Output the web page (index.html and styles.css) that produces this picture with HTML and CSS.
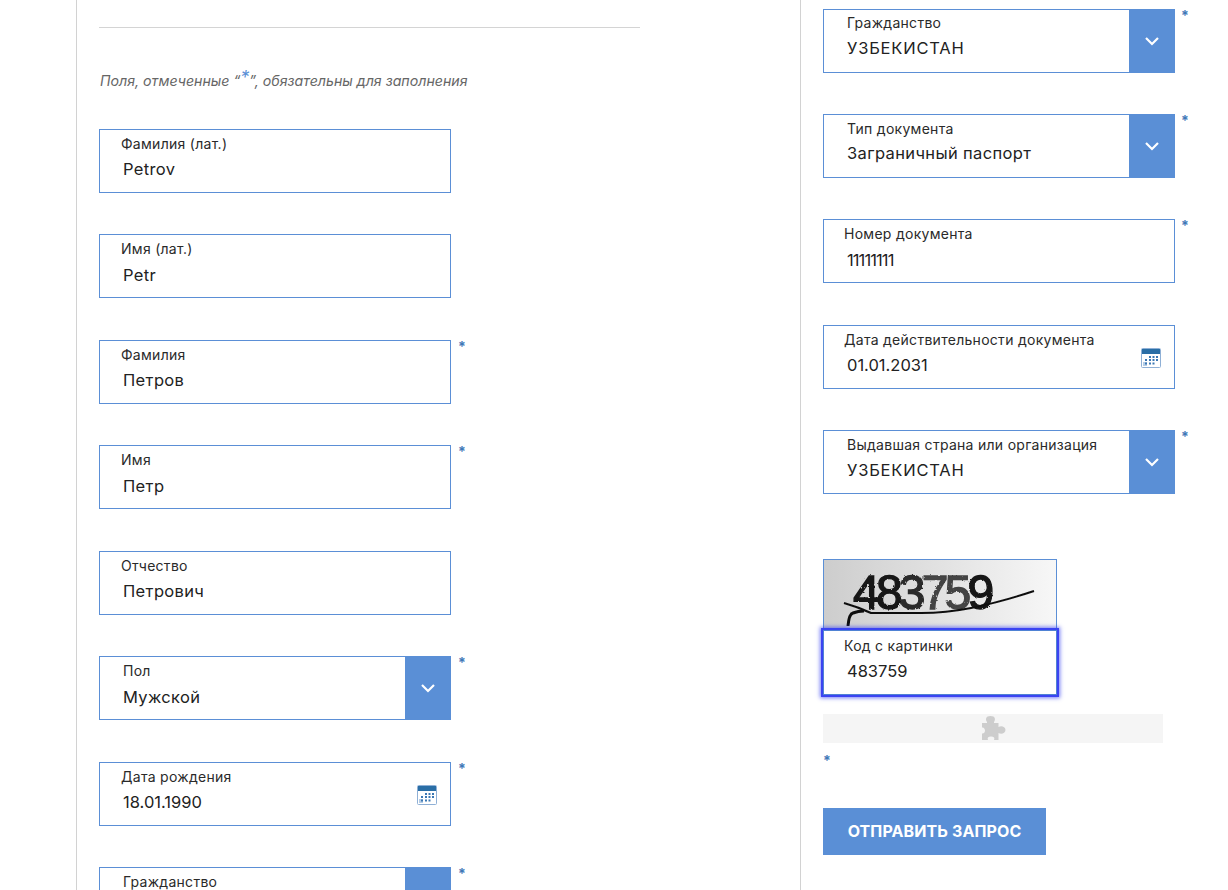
FILE: index.html
```html
<!DOCTYPE html>
<html lang="ru">
<head>
<meta charset="utf-8">
<title>Форма запроса</title>
<link rel="stylesheet" href="styles.css">
</head>
<body>
<svg class="defs" width="0" height="0" aria-hidden="true">
  <symbol id="chev" viewBox="0 0 16 10"><path d="M2 2l6 6 6-6" fill="none" stroke="#fff" stroke-width="2.2"/></symbol>
  <symbol id="cal" viewBox="0 0 20 20">
    <rect x=".5" y=".5" width="19" height="19" rx="1" fill="#fff" stroke="#8fb0d6"/>
    <rect x="1" y="1" width="18" height="5" fill="#2a6ea6"/>
    <path d="M2 14h4v4H2z" fill="#b5cde6"/>
    <path d="M8 8h2v2H8zM11.500 8h2v2h-2zM15 8h2v2h-2zM4 11h2v2H4zM8 11h2v2H8zM11.500 11h2v2h-2zM15 11h2v2h-2zM4 14.500h2v2H4zM8 14.500h2v2H8zM11.500 14.500h2v2h-2z" fill="#3c78b4"/>
  </symbol>
</svg>
<div class="page">
  <main class="left">
    <hr class="rule">
    <p class="note">Поля, отмеченные “<span class="note-star">*</span>”, обязательны для заполнения</p>
    <div class="col col-left">
      <div class="row"><div class="field"><label class="lab lab-in">Фамилия (лат.)</label><div class="val">Petrov</div></div></div>
      <div class="row"><div class="field"><label class="lab lab-in">Имя (лат.)</label><div class="val">Petr</div></div></div>
      <div class="row"><div class="field"><label class="lab lab-in">Фамилия</label><div class="val">Петров</div></div><span class="star">*</span></div>
      <div class="row"><div class="field"><label class="lab lab-in">Имя</label><div class="val">Петр</div></div><span class="star">*</span></div>
      <div class="row"><div class="field"><label class="lab lab-in">Отчество</label><div class="val">Петрович</div></div></div>
      <div class="row"><div class="field"><label class="lab">Пол</label><div class="val">Мужской</div><span class="drop"><svg class="chev"><use href="#chev"/></svg></span></div><span class="star">*</span></div>
      <div class="row"><div class="field"><label class="lab lab-in">Дата рождения</label><div class="val val-num">18.01.1990</div><svg class="cal"><use href="#cal"/></svg></div><span class="star">*</span></div>
      <div class="row"><div class="field"><label class="lab">Гражданство</label><div class="val">УЗБЕКИСТАН</div><span class="drop"><svg class="chev"><use href="#chev"/></svg></span></div><span class="star">*</span></div>
    </div>
  </main>
  <aside class="right">
    <div class="col col-right">
      <div class="row"><div class="field"><label class="lab lab-tight">Гражданство</label><div class="val val-caps">УЗБЕКИСТАН</div><span class="drop"><svg class="chev"><use href="#chev"/></svg></span></div><span class="star">*</span></div>
      <div class="row"><div class="field"><label class="lab">Тип документа</label><div class="val val-tight">Заграничный паспорт</div><span class="drop"><svg class="chev"><use href="#chev"/></svg></span></div><span class="star">*</span></div>
      <div class="row"><div class="field"><label class="lab lab-in2">Номер документа</label><div class="val val-ones">11111111</div></div><span class="star">*</span></div>
      <div class="row"><div class="field"><label class="lab lab-in2">Дата действительности документа</label><div class="val val-num">01.01.2031</div><svg class="cal"><use href="#cal"/></svg></div></div>
      <div class="row"><div class="field"><label class="lab">Выдавшая страна или организация</label><div class="val val-caps">УЗБЕКИСТАН</div><span class="drop"><svg class="chev"><use href="#chev"/></svg></span></div><span class="star">*</span></div>
    </div>
    <div class="captcha">
      <svg class="captcha-img" viewBox="0 0 232 70" role="img" aria-label="Капча">
        <defs>
          <linearGradient id="cg" x1="0" x2="1" y1="0" y2="0"><stop offset="0" stop-color="#cdcdcd"/><stop offset=".55" stop-color="#e4e4e4"/><stop offset="1" stop-color="#f7f7f7"/></linearGradient>
          <filter id="rough" x="-5%" y="-5%" width="110%" height="110%">
            <feTurbulence type="fractalNoise" baseFrequency=".35" numOctaves="2" seed="4" result="n"/>
            <feDisplacementMap in="SourceGraphic" in2="n" scale="2.500"/>
            <feGaussianBlur stdDeviation=".45"/>
          </filter>
          <filter id="soft"><feGaussianBlur stdDeviation=".5"/></filter>
        </defs>
        <rect width="232" height="70" fill="url(#cg)"/>
        <text x="29" y="49" class="captcha-txt" filter="url(#rough)"><tspan class="d1">48</tspan><tspan class="d2">3</tspan><tspan class="d3">75</tspan><tspan class="d1">9</tspan></text>
        <g filter="url(#soft)" fill="none" stroke="#111">
          <path d="M20 43q14 4 27 10h50q25 0 50-5 30-6 63-17" stroke-width="2"/>
          <path d="M24 66q1-12 5-13 5-2 11-2" stroke-width="3"/>
        </g>
      </svg>
      <div class="field field-focus"><label class="lab lab-in2">Код с картинки</label><div class="val val-num">483759</div></div>
    </div>
    <div class="puzzle-bar">
      <svg class="puzzle" viewBox="0 0 26 26"><path d="M7 7C5 4 6 1 10.500 1S16 4 14 7v1h4.500v4c2.500-1.500 7-.5 7 3s-4.500 4.500-7 3v7H14c1-2 0-3.500-3-3.500S7 23 8 25H2v-6.500c1.500.5 3-1 3-3S3.500 12 2 12.500V8h5z" fill="#cdcdcd"/></svg>
    </div>
    <div class="star star-solo">*</div>
    <button class="submit" type="button">ОТПРАВИТЬ ЗАПРОС</button>
  </aside>
</div>
</body>
</html>
```

FILE: styles.css
```css
html, body {
  margin: 0;
  padding: 0;
  background: #fff;
  height: 890px;
  overflow: hidden;
}
body {
  font-family: "Inter", "Noto Sans", "Liberation Sans", sans-serif;
  color: #222;
}
.defs { position: absolute; }
.page {
  display: flex;
  height: 890px;
  overflow: hidden;
  padding-left: 76px;
  box-sizing: border-box;
}
.left {
  width: 725px;
  box-sizing: border-box;
  border-left: 1px solid #d2d2d2;
  border-right: 1px solid #d2d2d2;
  padding: 27px 0 0 22px;
  flex: none;
}
.rule {
  width: 541px;
  height: 1px;
  border: 0;
  margin: 0;
  background: #d4d4d4;
}
.note {
  margin: 44px 0 38.9px 1px;
  height: 18px;
  font-size: 14.2px;
  line-height: 18px;
  font-style: italic;
  color: #666;
}
.note-star {
  color: #5a8fd6;
  font-size: 18px;
  line-height: 0;
  vertical-align: 2px;
}
.right {
  padding: 8.8px 0 0 22px;
  flex: none;
  width: 400px;
  box-sizing: border-box;
}
.col {
  display: flex;
  flex-direction: column;
}
.col-left { gap: 41.5px; }
.col-right { gap: 41.25px; }
.row {
  display: flex;
  align-items: flex-start;
  gap: 7px;
}
.col-right .row { gap: 6px; }
.field {
  position: relative;
  width: 352px;
  height: 64px;
  box-sizing: border-box;
  border: 1px solid #5b8fd6;
  background: #fff;
  flex: none;
}
.lab {
  display: block;
  padding: 5px 0 0 23px;
  font-size: 14px;
  letter-spacing: .28px;
  line-height: 18px;
  color: #2a2a2a;
  white-space: nowrap;
}
.lab-in { padding-left: 21px; }
.lab-in2 { padding-left: 20px; }
.lab-tight { padding-top: 4px; }
.val {
  padding: 5.5px 0 0 23px;
  font-size: 16.5px;
  letter-spacing: .35px;
  line-height: 22px;
  color: #222;
  white-space: nowrap;
}
.val-tight { padding-top: 3.5px; }
.val-caps { letter-spacing: .8px; }
.val-num { letter-spacing: 0; }
.val-ones { letter-spacing: -.9px; }
.drop {
  position: absolute;
  top: -1px;
  right: -1px;
  bottom: -1px;
  width: 46px;
  background: #5a8fd6;
  display: flex;
  align-items: center;
  justify-content: center;
}
.chev { width: 16px; height: 10px; }
.cal {
  position: absolute;
  right: 13px;
  top: 22px;
  width: 20px;
  height: 20px;
}
.star {
  color: #3f78b8;
  font-size: 14px;
  line-height: 14px;
  font-weight: 700;
}
.captcha { margin-top: 65.2px; width: 234px; }
.captcha-img {
  display: block;
  width: 232px;
  height: 70px;
  border: 1px solid #5b8fd6;
  border-bottom: 0;
}
.captcha-txt {
  font-family: "Liberation Sans", sans-serif;
  font-size: 48px;
  letter-spacing: -3.8px;
  stroke: #141414;
  stroke-width: 1.4px;
}
.d1 { fill: #141414; }
.d2 { fill: #2a2a2a; stroke: #2a2a2a; }
.d3 { fill: #444; stroke: #444; }
.field-focus {
  width: 234px;
  height: 65px;
  border-color: #4f82d4;
  box-shadow: 0 0 0 2px #3b44f2, 0 0 4px 3px rgba(59, 68, 242, .7);
}
.field-focus .lab { padding-top: 6px; }
.puzzle-bar {
  margin-top: 19px;
  width: 340px;
  height: 29px;
  background: #f5f5f5;
  display: flex;
  align-items: center;
  justify-content: center;
}
.puzzle { width: 26px; height: 26px; }
.star-solo { margin-top: 11px; height: 14px; }
.submit {
  display: block;
  margin-top: 40px;
  width: 223px;
  height: 47px;
  border: 0;
  background: #5a8fd6;
  color: #fff;
  font: 700 16px/47px "Inter", "Noto Sans", sans-serif;
  letter-spacing: .1px;
  padding: 0;
}
```
